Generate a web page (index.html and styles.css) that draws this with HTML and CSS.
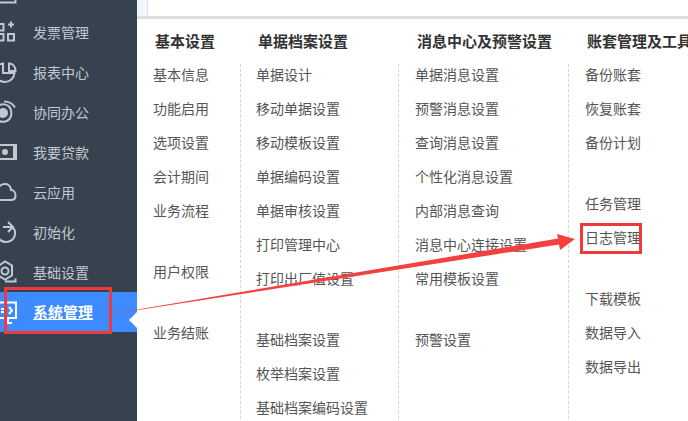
FILE: index.html
```html
<!DOCTYPE html>
<html lang="zh-CN">
<head>
  <meta charset="UTF-8">
  <title>系统管理</title>
  <link rel="stylesheet" href="styles.css">
</head>
<body>
  <div class="page">
    <aside class="sidebar">
      <div class="side-top">
        <svg class="side-icon" viewBox="0 0 18 13"><path d="M0 2.500H15.500V0"/></svg>
      </div>
      <div class="side-item">
        <svg class="side-icon" viewBox="0 0 18 40"><path d="M-1 11H3.500V17.500H-1M8 11.500H14M11 8.500V14.500M-1 21H3.500V27.500H-1M8 21H14V27.500H8Z"/></svg>
        <span>发票管理</span>
      </div>
      <div class="side-item">
        <svg class="side-icon" viewBox="0 0 18 40"><path d="M9 10.500C13 10.500 15.500 13.500 15.500 18H9ZM-1 11.500L3 10.500V20H14.500C14 25.500 10 29 5 29C3 29 1 28.500-1 27.500"/></svg>
        <span>报表中心</span>
      </div>
      <div class="side-item">
        <svg class="side-icon" viewBox="0 0 18 40"><circle class="solid" cx="3" cy="20" r="5"/><path d="M-1 12.500C2 10.500 7 11 9.500 14C12 17 12 23 9.500 26C7 29 2 29.500-1 28M4 8.500C9 8.500 13 11 15 14.500"/></svg>
        <span>协同办公</span>
      </div>
      <div class="side-item">
        <svg class="side-icon" viewBox="0 0 18 40"><path d="M-1 12H16V26H-1"/><circle class="solid" cx="5" cy="19" r="3"/><path d="M14 12V26"/></svg>
        <span>我要贷款</span>
      </div>
      <div class="side-item">
        <svg class="side-icon" viewBox="0 0 18 40"><path d="M-1 14C1 11 6 10 8.500 12C10.500 13.500 11 15 11 17C14 17 15.500 20 15.500 22.500C15.500 25.500 13.500 27 11 27H-1"/></svg>
        <span>云应用</span>
      </div>
      <div class="side-item">
        <svg class="side-icon" viewBox="0 0 18 40"><path d="M3 14H11C14 14 15.500 18 15 21.500C14.500 25.500 11 29 6 29C3 29 1 28-1 26M8 9L13 14L8 19"/></svg>
        <span>初始化</span>
      </div>
      <div class="side-item">
        <svg class="side-icon" viewBox="0 0 18 40"><path d="M-1 12.500L5 8.500L12 12.500V22.500L5 26.500L-1 23M5 28.500H15.500V25.500"/><circle cx="5" cy="18" r="3.500"/></svg>
        <span>基础设置</span>
      </div>
      <div class="side-item side-active">
        <svg class="side-icon" viewBox="0 0 18 40"><path d="M-1 10.500H16V26H-1M4 31H12M8 26V31M9 15L12 18.500L9 22M1 17H4M1 20H4"/></svg>
        <span>系统管理</span>
        <i class="side-caret"></i>
      </div>
    </aside>

    <main class="panel">
      <div class="tab-strip"><div class="tab-stub"></div></div>
      <div class="menu-columns">
        <section class="menu-col">
          <h3>基本设置</h3>
          <div class="menu-list">
            <div class="menu-group">
              <a>基本信息</a><a>功能启用</a><a>选项设置</a><a>会计期间</a><a>业务流程</a>
            </div>
            <div class="menu-group"><a>用户权限</a></div>
            <div class="menu-group"><a>业务结账</a></div>
          </div>
        </section>
        <section class="menu-col">
          <h3>单据档案设置</h3>
          <div class="menu-list">
            <div class="menu-group">
              <a>单据设计</a><a>移动单据设置</a><a>移动模板设置</a><a>单据编码设置</a><a>单据审核设置</a><a>打印管理中心</a><a>打印出厂值设置</a>
            </div>
            <div class="menu-group">
              <a>基础档案设置</a><a>枚举档案设置</a><a>基础档案编码设置</a>
            </div>
          </div>
        </section>
        <section class="menu-col">
          <h3>消息中心及预警设置</h3>
          <div class="menu-list">
            <div class="menu-group">
              <a>单据消息设置</a><a>预警消息设置</a><a>查询消息设置</a><a>个性化消息设置</a><a>内部消息查询</a><a>消息中心连接设置</a><a>常用模板设置</a>
            </div>
            <div class="menu-group"><a>预警设置</a></div>
          </div>
        </section>
        <section class="menu-col">
          <h3>账套管理及工具</h3>
          <div class="menu-list">
            <div class="menu-group">
              <a>备份账套</a><a>恢复账套</a><a>备份计划</a>
            </div>
            <div class="menu-group">
              <a>任务管理</a><a>日志管理</a>
            </div>
            <div class="menu-group">
              <a>下载模板</a><a>数据导入</a><a>数据导出</a>
            </div>
          </div>
        </section>
      </div>
    </main>

    <!-- red marks drawn over the screenshot -->
    <svg class="marks" viewBox="0 0 688 421">
      <rect x="5.500" y="288.500" width="105" height="44"/>
      <rect x="581.500" y="224.500" width="59" height="28"/>
      <polygon class="arrow" points="93,317 558,238.500 557,234 575,239 560,250 559,244.500"/>
    </svg>
  </div>
</body>
</html>
```

FILE: styles.css
```css
html, body {
  margin: 0;
  height: 100%;
  overflow: hidden;
}
body {
  font-family: "Noto Sans CJK SC", "Liberation Sans", sans-serif;
  font-size: 14px;
  color: #555;
  background: #fff;
}
.page {
  position: relative;
  display: flex;
  width: 688px;
  height: 421px;
  overflow: hidden;
}

/* left nav */
.sidebar {
  flex: 0 0 137px;
  background: #374250;
  color: #c3c8cf;
}
.side-top {
  height: 13px;
}
.side-item {
  position: relative;
  display: flex;
  align-items: center;
  height: 40px;
}
.side-item span {
  margin-left: 15px;
  padding-bottom: 2px;
  line-height: 38px;
}
.side-icon {
  display: block;
  flex: 0 0 18px;
  width: 18px;
  height: 40px;
  fill: none;
  stroke: currentColor;
  stroke-width: 2;
}
.side-top .side-icon {
  height: 13px;
}
.side-icon .solid {
  fill: currentColor;
  stroke: none;
}
.side-active {
  margin-top: -1px;
  background: #3c8cff;
  color: #fff;
}
.side-active span {
  padding-bottom: 0;
  font-size: 15px;
  font-weight: bold;
  text-decoration: underline;
}
.side-caret {
  position: absolute;
  right: 0;
  top: 20px;
  width: 0;
  height: 0;
  border: 8px solid transparent;
  border-left: 0;
  border-right-color: #fff;
}

/* top strip above the menu */
.panel {
  flex: 1;
  min-width: 0;
}
.tab-strip {
  height: 16px;
  border-bottom: 3px solid #dedede;
}
.tab-stub {
  width: 10px;
  height: 16px;
  background: #f0f5ff;
  border-right: 1px solid #e4e4e4;
}

/* menu columns */
.menu-columns {
  display: grid;
  grid-template-columns: 103px 158px 170px 1fr;
}
.menu-col {
  min-width: 0;
}
.menu-col h3 {
  margin: 12px 0 13px 18px;
  font-size: 15px;
  font-weight: bold;
  line-height: 20px;
  color: #333;
  white-space: nowrap;
}
.menu-col:nth-child(n+3) h3 {
  margin-left: 19px;
}
.menu-list {
  display: flex;
  flex-direction: column;
  gap: 41px;
  height: 400px;
  padding-left: 15px;
  border-left: 1px dashed #d4d4d4;
}
.menu-col:first-child .menu-list {
  border-left-color: transparent;
}
.menu-col:nth-child(n+3) .menu-list {
  padding-left: 16px;
}
.menu-group {
  display: flex;
  flex-direction: column;
  gap: 14px;
}
.menu-group a {
  line-height: 20px;
  white-space: nowrap;
}

.marks {
  position: absolute;
  left: 0;
  top: 0;
  width: 688px;
  height: 421px;
  fill: none;
  stroke: #f0393a;
  stroke-width: 3;
}
.marks .arrow {
  fill: #f4403f;
  stroke: none;
}
```
